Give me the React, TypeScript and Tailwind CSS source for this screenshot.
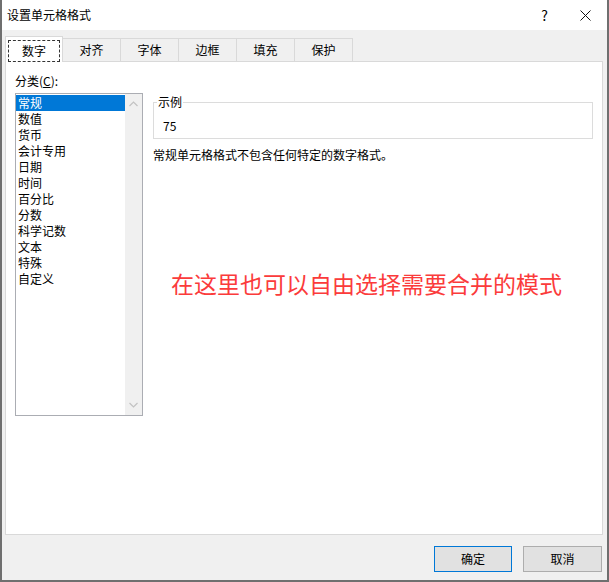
import React from 'react';

const tabs = ['数字', '对齐', '字体', '边框', '填充', '保护'];
const categories = ['常规', '数值', '货币', '会计专用', '日期', '时间', '百分比', '分数', '科学记数', '文本', '特殊', '自定义'];

const Chevron: React.FC<{ up?: boolean }> = ({ up }) => (
  <svg width="9" height="6" viewBox="0 0 9 6" className="text-[#c2c2c2]">
    <path
      d={up ? 'M0.5 5L4.5 1L8.5 5' : 'M0.5 1L4.5 5L8.5 1'}
      fill="none"
      stroke="currentColor"
      strokeWidth="1.2"
    />
  </svg>
);

const App: React.FC = () => {
  return (
    <div className="w-[609px] h-[582px] flex flex-col bg-[#f0f0f0] border-l-2 border-r-2 border-b-2 border-[#6f6f6f] text-black font-['Noto_Sans_CJK_SC',sans-serif] text-[12px] leading-[16px]">
      {/* title bar */}
      <div className="h-[30px] bg-white flex items-center shrink-0">
        <span className="ml-[5px] text-[12px]">设置单元格格式</span>
        <span className="ml-auto mr-[32px] text-[14px] leading-none">?</span>
        <svg width="11" height="11" viewBox="0 0 11 11" className="mr-[16px]">
          <path d="M0.5 0.5L10.5 10.5M10.5 0.5L0.5 10.5" stroke="#111" strokeWidth="1" fill="none" />
        </svg>
      </div>

      {/* tabs */}
      <div className="flex items-end h-[25px] mt-[6px] pl-[3px] shrink-0">
        {tabs.map((t, i) =>
          i === 0 ? (
            <div
              key={t}
              className="relative z-10 w-[58px] h-[26px] -mb-px bg-white border border-b-0 border-[#d9d9d9] flex items-center justify-center px-[2px] pt-[2px]"
            >
              <div className="w-full h-[22px] border border-dashed border-[#333] flex items-center justify-center">
                {t}
              </div>
            </div>
          ) : (
            <div
              key={t}
              className="w-[58px] h-[23px] bg-[#f0f0f0] border border-l-0 border-b-0 border-[#d9d9d9] flex items-center justify-center"
            >
              {t}
            </div>
          )
        )}
      </div>

      {/* panel */}
      <div className="ml-[3px] w-[598px] h-[474px] bg-white border border-[#d9d9d9] flex shrink-0">
        <div className="ml-[9px] w-[128px] pt-[11px] flex flex-col">
          <div>
            分类(<span className="underline">C</span>):
          </div>
          <div className="mt-[4px] h-[323px] border border-[#abadb3] flex">
            <div className="flex-1 pt-px">
              {categories.map((c, i) => (
                <div
                  key={c}
                  className={
                    i === 0
                      ? 'h-[16px] pl-[2px] bg-[#0078d7] text-white'
                      : 'h-[16px] pl-[2px]'
                  }
                >
                  {c}
                </div>
              ))}
            </div>
            <div className="w-[17px] bg-[#f0f0f0] flex flex-col items-center justify-between py-[7px]">
              <Chevron up />
              <Chevron />
            </div>
          </div>
        </div>

        <div className="ml-[10px] w-[440px] pt-[32px] flex flex-col">
          <fieldset className="border border-[#dcdcdc] pt-[8px] pb-[4px]">
            <legend className="ml-[3px] px-[1px]">示例</legend>
            <div className="pl-[9px]">75</div>
          </fieldset>
          <div className="mt-[8px]">常规单元格格式不包含任何特定的数字格式。</div>
          <div className="mt-[106px] pl-[18px] text-[23px] leading-[28px] text-[#fb3b3b]">
            在这里也可以自由选择需要合并的模式
          </div>
        </div>
      </div>

      {/* buttons */}
      <div className="flex justify-end gap-[11px] pr-[5px] mt-[11px]">
        <button className="w-[78px] h-[26px] bg-[#e1e1e1] border border-[#0078d7]">确定</button>
        <button className="w-[79px] h-[26px] bg-[#e1e1e1] border border-[#adadad]">取消</button>
      </div>
    </div>
  );
};

export default App;
